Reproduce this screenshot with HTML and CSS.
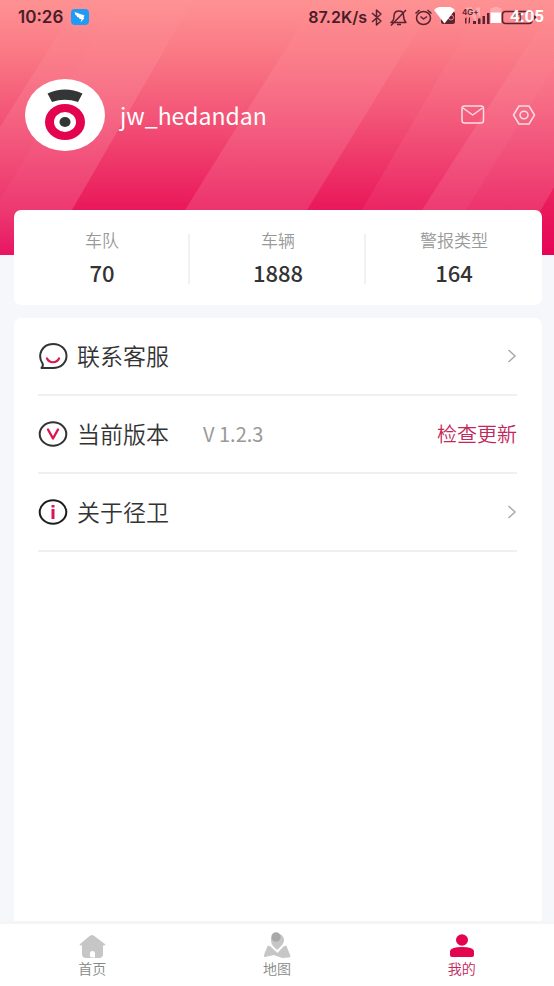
FILE: index.html
```html
<!DOCTYPE html>
<html lang="zh-CN">
<head>
<meta charset="utf-8">
<meta name="viewport" content="width=device-width, initial-scale=1">
<title>我的</title>
<link rel="stylesheet" href="styles.css">
</head>
<body>
<header class="hero">
  <svg class="hero-bg" viewBox="0 0 554 255" preserveAspectRatio="none" aria-hidden="true">
    <defs>
      <linearGradient id="base" x1="0" y1="0" x2="0" y2="1">
        <stop offset="0" stop-color="#fe9293"/>
        <stop offset=".2" stop-color="#fa7a85"/>
        <stop offset=".45" stop-color="#f35577"/>
        <stop offset=".8" stop-color="#ea1b5c"/>
        <stop offset="1" stop-color="#e60456"/>
      </linearGradient>
      <linearGradient id="shine" x1="0" y1="0" x2="0" y2="1">
        <stop offset="0" stop-color="#ff9c9c" stop-opacity=".05"/>
        <stop offset=".3" stop-color="#fc909c" stop-opacity=".3"/>
        <stop offset=".82" stop-color="#f4789c" stop-opacity=".28"/>
        <stop offset="1" stop-color="#f070a0" stop-opacity=".12"/>
      </linearGradient>
    </defs>
    <path fill="url(#base)" d="M0 0h554v255H0z"/>
    <path fill="url(#shine)" d="M0 127 80 0h113L72 210 46 255H0z"/>
    <path fill="url(#shine)" opacity=".3" d="M0 200 30 150 115 0h78L72 210 46 255H0z"/>
    <path fill="url(#shine)" d="M185 210 316 0h120L307 210 280 255H158z"/>
    <path fill="url(#shine)" opacity=".5" d="M362 210 484 0h70v187L515 255H336z"/>
    <path fill="url(#shine)" opacity=".6" d="M422 210 554 5v182L541 210 515 255H395z"/>
    <path fill="url(#shine)" opacity=".4" d="M422 210 554 5v62L466 210 438 255H395z"/>
  </svg>

  <div class="status">
    <div class="status-left">
      <span class="clock">10:26</span>
      <svg width="18" height="16" viewBox="0 0 18 16" aria-hidden="true">
        <rect width="18" height="16" rx="4" fill="#1f9bf5"/>
        <path fill="#fff" d="M3.500 3 13.500 6.500 12.500 9h1L9.500 13.500 10.500 10H8.500L8 8.500 6 8 5.800 6.800 4.500 6z"/>
      </svg>
    </div>
    <div class="status-right">
      <span class="speed">87.2K/s</span>
      <svg class="status-icons" width="168" height="20" viewBox="370 7 168 20" aria-hidden="true">
        <g fill="none" stroke="#5a2330" stroke-width="1.500" stroke-linejoin="round">
          <path d="m372 13 9 8-4.500 4V10l4.500 4-9 8"/>
          <path d="M391 22.500h15c-2-2-2.500-3-2.500-7 0-6-9-6-9.500 0 0 4-.5 5-3 7zM397 24.500h4M391 25.500 406 10"/>
          <ellipse cx="423.500" cy="18" rx="7" ry="6.500"/>
          <path d="m420.500 16.500 3 2.500 3.500-2.500M415.500 13.500l4-3.500M431.500 13.500l-4-3.500"/>
          <rect x="502.500" y="11.500" width="29.500" height="12" rx="3"/>
          <path d="M535 15.500v4" stroke-width="2"/>
        </g>
        <rect x="441" y="11.500" width="14" height="12.500" rx="2.500" fill="#5a2330"/>
        <circle cx="451" cy="17.500" r="2.500" fill="none" stroke="#ef8c96"/>
        <path fill="#fff" fill-opacity=".25" d="M465 8l6-1 9 10V7.500h-4V22zM490.500 8h3V7h5v1h3v5h-11z"/>
        <g fill="#5a2330">
          <text class="net" x="462" y="15">4G+</text>
          <text class="level" x="511" y="21">41</text>
          <path d="M465 18.500l1.500-1.500v6.500H465zM469 17.500h1v5l-1.500 1.500zM473 21h3v3h-3zM478 18.500h2.500V24H478zM482.500 16h2.500v8h-2.500zM487 13h2.500v11H487z"/>
        </g>
        <path fill="#fff" d="M434 10c6-5.500 15-5.500 21 0L444.500 23.500z"/>
        <path fill="#fff" d="M490.500 12.500h10.500V23h-10.500z"/>
      </svg>
      <span class="overlay-clock">4:05</span>
    </div>
  </div>

  <div class="profile">
    <svg class="avatar" width="80" height="72" viewBox="0 0 80 72" role="img" aria-label="头像">
      <ellipse cx="40" cy="36" rx="40" ry="36" fill="#fff"/>
      <path fill="#333536" d="M22.500 14.500Q40 6.500 57.500 14.500L53 23Q40 18.500 27 23z"/>
      <ellipse cx="40" cy="43" rx="20" ry="18" fill="#e4034f"/>
      <ellipse cx="40" cy="43" rx="11" ry="10" fill="#fff"/>
      <ellipse cx="40" cy="43" rx="5.500" ry="5" fill="#333536"/>
    </svg>
    <h1 class="name">jw_hedandan</h1>
    <button class="icon-btn" type="button" aria-label="消息">
      <svg width="24" height="20" viewBox="0 0 24 20"><g fill="none" stroke="#fbdde4" stroke-width="1.500"><rect x="1" y="1" width="21.500" height="17" rx="2.500"/><path d="m2 3 9.700 7L21.500 3" stroke-linejoin="round"/></g></svg>
    </button>
    <button class="icon-btn" type="button" aria-label="设置">
      <svg width="24" height="20" viewBox="0 0 24 20"><g fill="none" stroke="#fbdde4" stroke-width="1.500" stroke-linejoin="round"><path d="M7 1h10l5.500 9-5.500 9H7l-5.500-9z"/><ellipse cx="12" cy="10" rx="4" ry="3.700"/></g></svg>
    </button>
  </div>
</header>

<main class="content">
  <dl class="stats">
    <div class="stat"><dt>车队</dt><dd>70</dd></div>
    <div class="stat"><dt>车辆</dt><dd>1888</dd></div>
    <div class="stat"><dt>警报类型</dt><dd>164</dd></div>
  </dl>

  <ul class="menu">
    <li>
      <a class="row" href="#contact">
        <svg width="30" height="28" viewBox="0 0 30 28" aria-hidden="true"><path fill="none" stroke="#333" stroke-width="2" stroke-linejoin="round" d="M4.500 21.500C-1 13 4 2 15 2c8 0 13.500 5.500 13.500 12S23 26 15 26H3.500c1.500-1.500 1.700-3 1-4.500z"/><path fill="none" stroke="#dc1650" stroke-width="2.200" stroke-linecap="round" d="M9 16.500c2.500 5 9.500 5 12 0"/></svg>
        <span class="label">联系客服</span>
        <svg class="arrow" width="10" height="16" viewBox="0 0 10 16" aria-hidden="true"><path fill="none" stroke="#aaa" stroke-width="1.500" d="m1.500 2 6.500 6-6.500 6"/></svg>
      </a>
    </li>
    <li class="row">
      <svg width="30" height="28" viewBox="0 0 30 28" aria-hidden="true"><ellipse cx="15" cy="14" rx="13.300" ry="11.800" fill="none" stroke="#333" stroke-width="2"/><path fill="none" stroke="#dc1650" stroke-width="2.400" stroke-linecap="round" stroke-linejoin="round" d="m10 9.500 5 9 5-9"/></svg>
      <span class="label">当前版本</span>
      <span class="version">V 1.2.3</span>
      <button class="update" type="button">检查更新</button>
    </li>
    <li>
      <a class="row" href="#about">
        <svg width="30" height="28" viewBox="0 0 30 28" aria-hidden="true"><ellipse cx="15" cy="14" rx="13.300" ry="11.800" fill="none" stroke="#1d1d1d" stroke-width="2"/><path fill="#dc1650" d="M13.500 7h3v2.500h-3zM13.500 11h3v10h-3z"/></svg>
        <span class="label">关于径卫</span>
        <svg class="arrow" width="10" height="16" viewBox="0 0 10 16" aria-hidden="true"><path fill="none" stroke="#aaa" stroke-width="1.500" d="m1.500 2 6.500 6-6.500 6"/></svg>
      </a>
    </li>
  </ul>
</main>

<nav class="tabs">
  <a class="tab" href="#home">
    <svg width="28" height="28" viewBox="0 0 28 28" aria-hidden="true"><path fill="#c6c6c6" d="M14 3q1.500 0 3 1.500L27.500 12.500q0 1-2.500 1V22q0 4-4 4h-4v-4.500q0-2.500-2.500-2.500T12 21.500V24q0 1.500 2.500 1.500H17v.5H8q-4 0-4-4v-8.500q-2.500 0-2.500-1L11 4.500Q12.500 3 14 3z"/></svg>
    首页
  </a>
  <a class="tab" href="#map">
    <svg width="28" height="28" viewBox="0 0 28 28" aria-hidden="true"><path fill="#c6c6c6" d="M14 18C10 14.500 8 12 8 8a6.500 6.500 0 0 1 13 0c0 4-3 6.500-7 10zM4.500 14q1.500-.5 3 .5L14.500 21l6-6.500q1.500-1 3-.5L27.500 24q0 1.500-2 1.500L19 26l-8-3-9 2q-1.500 0-1-2z"/><circle cx="13" cy="5" r="4.700" fill="#a8a8a8"/></svg>
    地图
  </a>
  <a class="tab active" href="#me" aria-current="page">
    <svg width="28" height="28" viewBox="0 0 28 28" aria-hidden="true"><ellipse cx="14" cy="8" rx="6" ry="5.700" fill="#e4034f"/><path fill="#e4034f" d="M2 19q1-4 12-4t12 4v4q0 2-2 2H4q-2 0-2-2z"/></svg>
    我的
  </a>
</nav>
</body>
</html>
```
FILE: styles.css
```css
* { box-sizing: border-box; }

body {
  margin: 0;
  min-height: 100vh;
  display: flex;
  flex-direction: column;
  background: #f6f7fa;
  color: #333;
  font-family: "Noto Sans CJK SC", "Noto Sans", sans-serif;
}

svg { display: block; flex: none; }
a { color: inherit; text-decoration: none; }
button { padding: 0; border: 0; background: none; font: inherit; cursor: pointer; }

.hero {
  position: relative;
  padding-bottom: 104px;
}
.hero-bg {
  position: absolute;
  inset: 0;
  width: 100%;
  height: 100%;
}

.status {
  position: relative;
  display: flex;
  align-items: center;
  justify-content: space-between;
  height: 34px;
  padding: 0 16px 0 18px;
  color: #4a1c28;
  font: 600 17px/20px Inter, sans-serif;
}
.status-left { display: flex; align-items: center; gap: 8px; }
.status-right { display: flex; align-items: center; gap: 3px; }
.speed { font-size: 16px; }
.net { font: 600 8px Inter, sans-serif; }
.level { font: 600 10px Inter, sans-serif; }
.overlay-clock {
  position: absolute;
  right: 10px;
  top: 6px;
  color: #fff;
  font: 700 17px/20px Roboto, sans-serif;
}

.profile {
  position: relative;
  display: flex;
  align-items: center;
  gap: 27px;
  margin-top: 45px;
  padding: 0 18px 0 25px;
}
.name {
  flex: 1;
  margin: 0 0 0 -12px;
  color: #fff;
  font-size: 23px;
  font-weight: 400;
  line-height: 32px;
}

.content {
  position: relative;
  flex: 1;
  display: flex;
  flex-direction: column;
  gap: 13px;
  margin-top: -45px;
  padding: 0 12px 0 14px;
}

.stats {
  display: flex;
  margin: 0;
  padding: 19px 0 16px;
  border-radius: 7px;
  background: #fff;
}
.stat {
  flex: 1;
  height: 60px;
  text-align: center;
}
.stat:not(:last-child) {
  background: linear-gradient(#f1f1f1, #f1f1f1) right center / 2px 50px no-repeat;
}
.stat dt { color: #999; font-size: 17px; font-weight: 350; line-height: 22px; }
.stat dd { margin: 5px 0 0; font-size: 22px; font-weight: 500; line-height: 32px; }

.menu {
  flex: 1;
  margin: 0;
  padding: 0 25px 0 24px;
  border-radius: 7px 7px 0 0;
  background: #fff;
  list-style: none;
}
.row {
  display: flex;
  align-items: center;
  height: 78px;
  border-bottom: 2px solid #f0f0f0;
}
.label { margin-left: 9px; padding-bottom: 2px; font-size: 23px; font-weight: 350; line-height: 32px; }
.version { margin-left: 34px; color: #999; font-size: 20px; line-height: 28px; }
.update { margin-left: auto; color: #c2265a; font-size: 20px; font-weight: 350; line-height: 28px; }
.arrow { margin-left: auto; }

.tabs {
  display: flex;
  height: 65px;
  border-top: 3px solid #f5f5f5;
  background: #fff;
}
.tab {
  flex: 1;
  display: flex;
  flex-direction: column;
  align-items: center;
  padding-top: 8px;
  color: #888;
  font-size: 14px;
  font-weight: 350;
  line-height: 16px;
}
.tab.active { color: #c2265a; }
```
